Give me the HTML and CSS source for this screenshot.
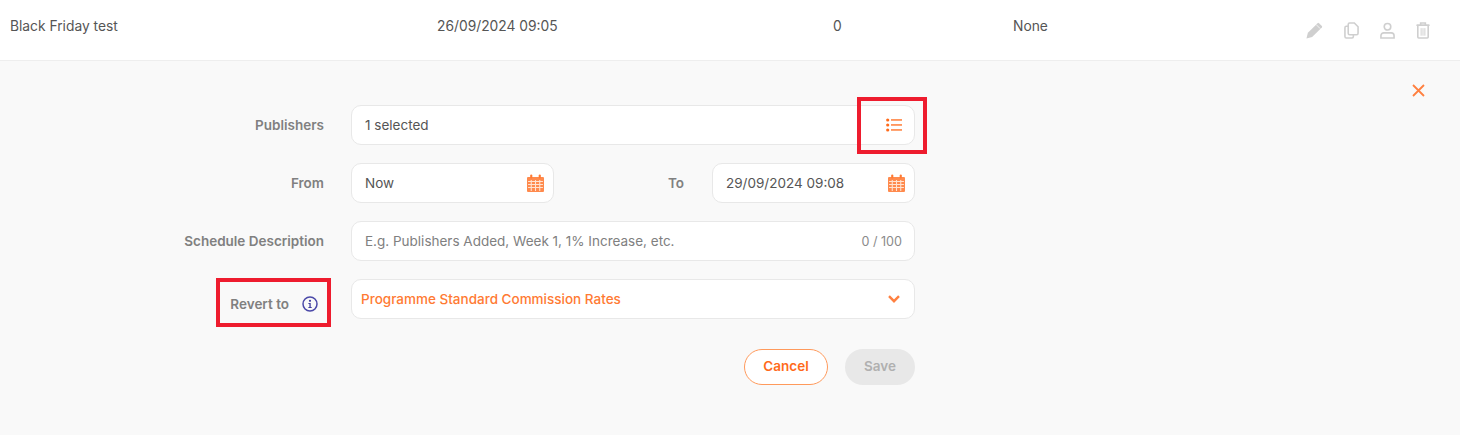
FILE: index.html
```html
<!DOCTYPE html>
<html lang="en">
<head>
  <meta charset="UTF-8">
  <title>Schedule</title>
  <link rel="stylesheet" href="styles.css">
</head>
<body>
  <div class="wrap">
    <div class="toprow">
      <div>Black Friday test</div>
      <div>26/09/2024 09:05</div>
      <div>0</div>
      <div>None</div>
      <div class="actions">
        <svg width="17" height="17" viewBox="0 0 18 18"><path d="M0.500 17.500l1.500-6L12.300 1.200a1 1 0 0 1 1.400 0l3.100 3.100a1 1 0 0 1 0 1.400L6.500 16z" fill="#cfcfcf"/><path d="M11 3l4 4" stroke="#fff" stroke-width="0.800"/></svg>
        <svg width="15" height="17" viewBox="0 0 16 18" fill="none" stroke="#cfcfcf" stroke-width="1.700"><path d="M6 1h5l4 4v7a1.500 1.500 0 0 1-1.500 1.500H6A1.500 1.500 0 0 1 4.500 12V2.500A1.500 1.500 0 0 1 6 1z"/><path d="M4.500 4.500H2.500A1.500 1.500 0 0 0 1 6v9.500A1.500 1.500 0 0 0 2.500 17h6a1.500 1.500 0 0 0 1.500-1.500v-2"/></svg>
        <svg width="15" height="17" viewBox="0 0 16 18" fill="none" stroke="#cfcfcf" stroke-width="1.700"><circle cx="8" cy="5" r="3.500"/><path d="M1 17v-2.500a3 3 0 0 1 3-3h8a3 3 0 0 1 3 3V17z"/></svg>
        <svg width="14" height="17" viewBox="0 0 14 18" fill="none" stroke="#cfcfcf" stroke-width="1.700"><path d="M0 3.500h14M4.500 3V1h5v2"/><path d="M1.500 3.500V16a1 1 0 0 0 1 1h9a1 1 0 0 0 1-1V3.500z"/><path d="M5 6.500v8M7 6.500v8M9 6.500v8" stroke-width="1"/></svg>
      </div>
    </div>

    <div class="panel">
      <svg class="close" width="13" height="13" viewBox="0 0 13 13" fill="none" stroke="#ff8040" stroke-width="1.800"><path d="M1 1l11 11M12 1L1 12"/></svg>

      <div class="formrow">
        <label class="lbl">Publishers</label>
        <div class="field grow">
          <span>1 selected</span>
          <svg width="16" height="14" viewBox="0 0 16 14" fill="#ff6a1a"><circle cx="1.700" cy="2" r="1.600"/><circle cx="1.700" cy="7" r="1.600"/><circle cx="1.700" cy="12" r="1.600"/><rect x="5" y="1.300" width="11" height="1.300"/><rect x="5" y="6.300" width="11" height="1.300"/><rect x="5" y="11.300" width="11" height="1.300"/></svg>
        </div>
      </div>

      <div class="formrow">
        <label class="lbl">From</label>
        <div class="field half">
          <span>Now</span>
          <svg class="cal" width="17" height="18" viewBox="0 0 16 18" preserveAspectRatio="none"><path d="M0 4a1 1 0 0 1 1-1h14a1 1 0 0 1 1 1v13a1 1 0 0 1-1 1H1a1 1 0 0 1-1-1z" fill="#ff8a4d"/><rect x="3" y="0.500" width="2" height="4" rx="1" fill="#ff7a33"/><rect x="11" y="0.500" width="2" height="4" rx="1" fill="#ff7a33"/><path d="M1 7.500h14M1 10.500h14M1 13.500h14M4 6v11M8 6v11M12 6v11" stroke="#ffe3d1" stroke-width="1"/></svg>
        </div>
        <label class="lbl lbl-to">To</label>
        <div class="field half">
          <span>29/09/2024 09:08</span>
          <svg class="cal" width="17" height="18" viewBox="0 0 16 18" preserveAspectRatio="none"><path d="M0 4a1 1 0 0 1 1-1h14a1 1 0 0 1 1 1v13a1 1 0 0 1-1 1H1a1 1 0 0 1-1-1z" fill="#ff8a4d"/><rect x="3" y="0.500" width="2" height="4" rx="1" fill="#ff7a33"/><rect x="11" y="0.500" width="2" height="4" rx="1" fill="#ff7a33"/><path d="M1 7.500h14M1 10.500h14M1 13.500h14M4 6v11M8 6v11M12 6v11" stroke="#ffe3d1" stroke-width="1"/></svg>
        </div>
      </div>

      <div class="formrow">
        <label class="lbl">Schedule Description</label>
        <div class="field grow">
          <span class="placeholder">E.g. Publishers Added, Week 1, 1% Increase, etc.</span>
          <span class="count">0 / 100</span>
        </div>
      </div>

      <div class="formrow">
        <label class="lbl lbl-revert">Revert to
          <svg class="info" width="16" height="16" viewBox="0 0 16 16"><circle cx="8" cy="8" r="7" fill="none" stroke="#4a48a8" stroke-width="1.500"/><circle cx="8" cy="4.800" r="1.100" fill="#3f3d9e"/><path d="M6.400 7h2.300v4h1v1.100H6.400V11h1V8.100h-1z" fill="#3f3d9e"/></svg>
        </label>
        <div class="field grow field-select">
          <span>Programme Standard Commission Rates</span>
          <svg width="12" height="8" viewBox="0 0 12 8" fill="none" stroke="#ff8040" stroke-width="2.400"><path d="M1 1.200l5 5 5-5"/></svg>
        </div>
      </div>

      <div class="buttons">
        <button class="btn btn-cancel">Cancel</button>
        <button class="btn btn-save">Save</button>
      </div>

      <div class="redbox redbox-list"></div>
      <div class="redbox redbox-revert"></div>
    </div>
  </div>
</body>
</html>
```

FILE: styles.css
```css
body{
  margin: 0;
  background-color: #ffffff;
  font-family: Inter, 'Liberation Sans', sans-serif;
  font-size: 13.5px;
  color: #555555;
}
.wrap{
  width: 1460px;
  height: 435px;
  overflow: hidden;
}
.toprow{
  display: grid;
  grid-template-columns: 427px 396px 180px 1fr auto;
  align-items: center;
  height: 52px;
  padding: 0 30px 8px 10px;
  border-bottom: 1px solid #eeeeee;
  font-size: 13.8px;
}
.actions{
  display: flex;
  align-items: center;
  gap: 21px;
  padding-top: 8px;
}
.panel{
  position: relative;
  height: 374px;
  box-sizing: border-box;
  padding-top: 44px;
  background-color: #f9f9f9;
}
.close{
  position: absolute;
  top: 23px;
  left: 1412px;
}
.formrow{
  display: flex;
  align-items: center;
  width: 915px;
  height: 40px;
  margin-bottom: 18px;
}
.lbl{
  flex: none;
  width: 324px;
  margin-right: 27px;
  text-align: right;
  font-weight: 600;
  color: #808080;
}
.lbl-to{
  width: 130px;
  margin-right: 28px;
}
.lbl-revert{
  display: flex;
  align-items: center;
  justify-content: flex-end;
  gap: 13px;
  width: 318px;
  margin-right: 33px;
  padding-top: 10px;
}
.info{
  flex: none;
}
.field{
  display: flex;
  align-items: center;
  justify-content: space-between;
  box-sizing: border-box;
  height: 40px;
  padding: 0 12px 0 13px;
  background-color: #ffffff;
  border: 1px solid #e8e8e8;
  border-radius: 10px;
}
.grow{
  flex: 1;
}
.half{
  flex: none;
  width: 203px;
  padding-right: 9px;
}
.placeholder{
  color: #808080;
}
.count{
  color: #8a8a8a;
  font-size: 12.6px;
}
.field-select{
  padding: 0 14px 0 9px;
  color: #ff7a33;
  font-weight: 500;
}
.buttons{
  display: flex;
  justify-content: flex-end;
  gap: 17px;
  width: 915px;
  margin-top: 30px;
}
.btn{
  height: 36px;
  border-radius: 18px;
  font-family: inherit;
  font-size: 13.5px;
  font-weight: 600;
  padding: 0 0 2px;
}
.btn-cancel{
  width: 84px;
  color: #ff6a1a;
  background-color: #ffffff;
  border: 1px solid #ff9a5c;
}
.btn-save{
  width: 70px;
  color: #b0b0b0;
  background-color: #e8e8e8;
  border: none;
}
.redbox{
  position: absolute;
  box-sizing: border-box;
  border: 4px solid #ee1c2e;
}
.redbox-list{
  left: 857px;
  top: 36px;
  width: 70px;
  height: 57px;
}
.redbox-revert{
  left: 216px;
  top: 217px;
  width: 115px;
  height: 49px;
}
```
